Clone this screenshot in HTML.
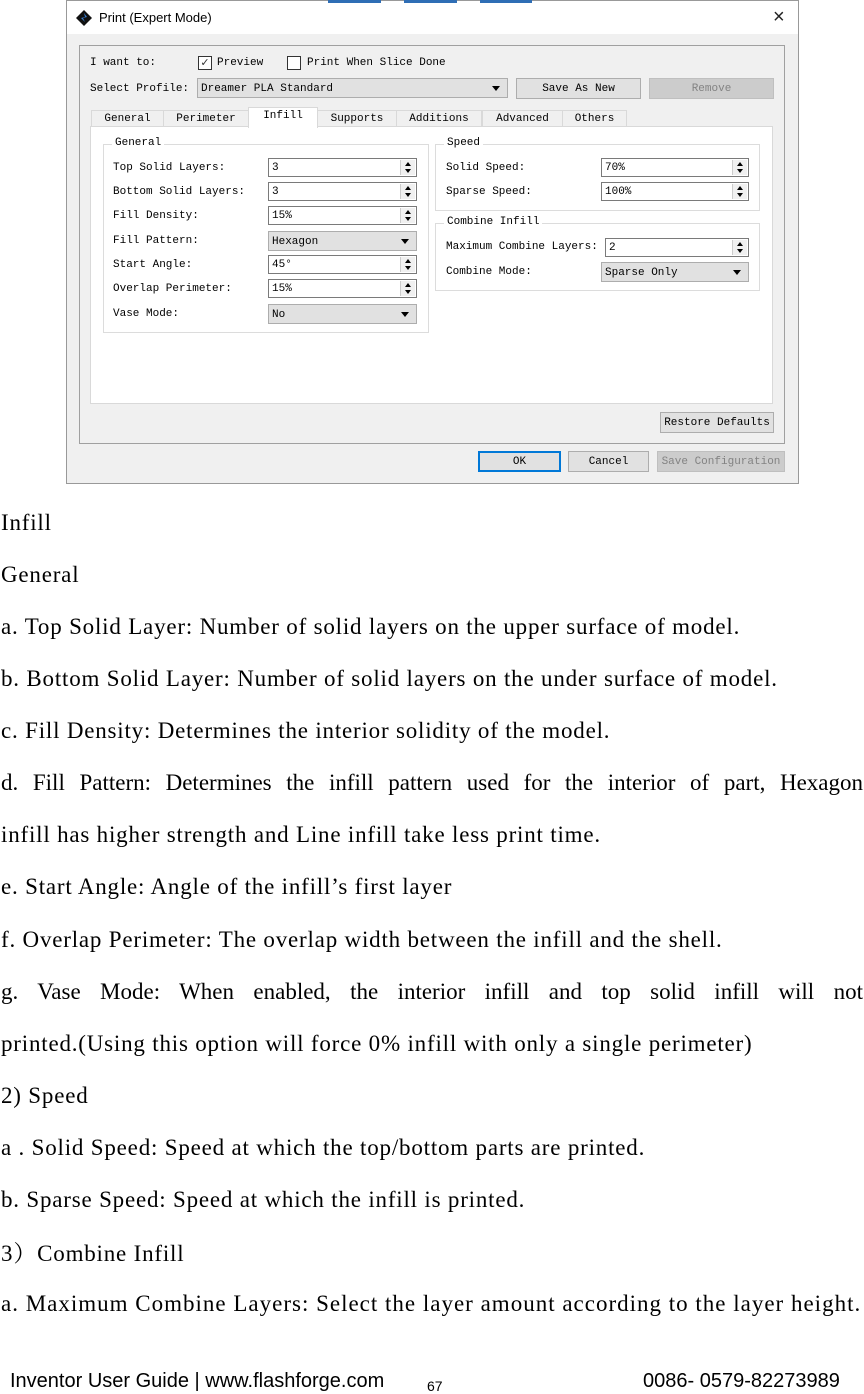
<!DOCTYPE html>
<html><head><meta charset="utf-8"><style>
*{margin:0;padding:0;box-sizing:border-box}
body{width:864px;height:1393px;background:#fff;position:relative;overflow:hidden;font-family:"Liberation Serif",serif}
.a{position:absolute}
.m{font-family:"Liberation Mono","DejaVu Sans Mono",monospace;font-size:11px;color:#000;white-space:nowrap;line-height:13px}
.inp{position:absolute;background:#fff;border:1px solid #7a7a7a;height:19px;width:149px}
.inp span{position:absolute;left:3px;top:3px}
.spin{position:absolute;right:1px;top:1px;width:15px;height:15px;border-left:1px solid #ccc;background:#f0f0f0}
.spin:before{content:"";position:absolute;left:4px;top:2px;border:3px solid transparent;border-bottom:4px solid #000;border-top:0}
.spin:after{content:"";position:absolute;left:4px;top:9px;border:3px solid transparent;border-top:4px solid #000;border-bottom:0}
.cmb{position:absolute;background:#e1e1e1;border:1px solid #adadad;height:20px;width:149px}
.cmb span{position:absolute;left:3px;top:4px}
.cmb:after{content:"";position:absolute;right:7px;top:7px;border:4px solid transparent;border-top:5px solid #000;border-bottom:0}
.btn{position:absolute;background:#e1e1e1;border:1px solid #adadad;text-align:center}
.grp{position:absolute;border:1px solid #dcdcdc}
.grp b{position:absolute;top:-8px;left:8px;background:#fff;padding:0 3px;font-weight:normal}
.tab{position:absolute;top:110px;height:17px;border:1px solid #d9d9d9;background:#f0f0f0;text-align:center;padding-top:2px}
.t{position:absolute;left:1px;font-size:23px;letter-spacing:0.8px;line-height:26px;color:#000;white-space:nowrap}
.f{position:absolute;top:1370px;font-family:'Liberation Sans',sans-serif;font-size:20px;color:#000;white-space:nowrap}
</style></head><body>
<div class="a" style="left:66px;top:0;width:733px;height:484px;background:#f0f0f0;border:1px solid #999"></div>
<div class="a" style="left:67px;top:1px;width:731px;height:33px;background:#fff"></div>
<div class="a" style="left:328px;top:0;width:53px;height:3px;background:#2f6eb5"></div>
<div class="a" style="left:404px;top:0;width:53px;height:3px;background:#2f6eb5"></div>
<div class="a" style="left:480px;top:0;width:52px;height:3px;background:#2f6eb5"></div>
<svg class="a" style="left:75px;top:9px" width="18" height="18" viewBox="0 0 18 18"><path d="M9 1L17 9L9 17L1 9Z" fill="#111"/><path d="M9 4L12 8L8 9L10 13L6 9L10 8Z" fill="#3a7fd0"/></svg>
<div class="a" style="left:99px;top:10px;font-family:'Liberation Sans',sans-serif;font-size:13px;color:#000">Print (Expert Mode)</div>
<div class="a" style="left:773px;top:7px;font-family:'Liberation Sans',sans-serif;font-size:20px;color:#222;line-height:20px">×</div>
<div class="a" style="left:79px;top:45px;width:706px;height:399px;border:1px solid #a0a0a0;background:#f0f0f0"></div>
<div class="a m" style="left:90px;top:57px">I want to:</div>
<div class="a" style="left:198px;top:56px;width:14px;height:14px;border:1px solid #333;background:#fff;font-size:11px;line-height:12px;text-align:center;color:#333">✓</div>
<div class="a m" style="left:217px;top:57px">Preview</div>
<div class="a" style="left:287px;top:56px;width:14px;height:14px;border:1px solid #333;background:#fff"></div>
<div class="a m" style="left:307px;top:57px">Print When Slice Done</div>
<div class="a m" style="left:90px;top:83px">Select Profile:</div>
<div class="cmb m" style="left:197px;top:78px;width:311px"><span>Dreamer PLA Standard</span></div>
<div class="btn m" style="left:516px;top:78px;width:125px;height:21px;padding-top:4px">Save As New</div>
<div class="btn m" style="left:649px;top:78px;width:125px;height:21px;padding-top:4px;background:#ccc;border-color:#bfbfbf;color:#838383">Remove</div>
<div class="tab m" style="left:91px;width:73px">General</div>
<div class="tab m" style="left:163px;width:86px">Perimeter</div>
<div class="tab m" style="left:317px;width:80px">Supports</div>
<div class="tab m" style="left:396px;width:86px">Additions</div>
<div class="tab m" style="left:482px;width:81px">Advanced</div>
<div class="tab m" style="left:562px;width:65px">Others</div>
<div class="a" style="left:90px;top:126px;width:683px;height:278px;background:#fff;border:1px solid #d9d9d9"></div>
<div class="tab m" style="left:248px;width:70px;top:107px;height:21px;background:#fff;border-bottom:none">Infill</div>
<div class="grp m" style="left:103px;top:144px;width:326px;height:189px"><b>General</b></div>
<div class="a m" style="left:113px;top:162px">Top Solid Layers:</div>
<div class="inp m" style="left:268px;top:158px"><span>3</span><i class="spin"></i></div>
<div class="a m" style="left:113px;top:186px">Bottom Solid Layers:</div>
<div class="inp m" style="left:268px;top:182px"><span>3</span><i class="spin"></i></div>
<div class="a m" style="left:113px;top:210px">Fill Density:</div>
<div class="inp m" style="left:268px;top:206px"><span>15%</span><i class="spin"></i></div>
<div class="a m" style="left:113px;top:235px">Fill Pattern:</div>
<div class="cmb m" style="left:268px;top:231px"><span>Hexagon</span></div>
<div class="a m" style="left:113px;top:259px">Start Angle:</div>
<div class="inp m" style="left:268px;top:255px"><span>45°</span><i class="spin"></i></div>
<div class="a m" style="left:113px;top:283px">Overlap Perimeter:</div>
<div class="inp m" style="left:268px;top:279px"><span>15%</span><i class="spin"></i></div>
<div class="a m" style="left:113px;top:308px">Vase Mode:</div>
<div class="cmb m" style="left:268px;top:304px"><span>No</span></div>
<div class="grp m" style="left:435px;top:144px;width:325px;height:67px"><b>Speed</b></div>
<div class="a m" style="left:446px;top:162px">Solid Speed:</div>
<div class="inp m" style="left:601px;top:158px;width:148px"><span>70%</span><i class="spin"></i></div>
<div class="a m" style="left:446px;top:186px">Sparse Speed:</div>
<div class="inp m" style="left:601px;top:182px;width:148px"><span>100%</span><i class="spin"></i></div>
<div class="grp m" style="left:435px;top:223px;width:325px;height:68px"><b>Combine Infill</b></div>
<div class="a m" style="left:446px;top:241px">Maximum Combine Layers:</div>
<div class="inp m" style="left:605px;top:238px;width:144px"><span>2</span><i class="spin"></i></div>
<div class="a m" style="left:446px;top:266px">Combine Mode:</div>
<div class="cmb m" style="left:601px;top:262px;width:148px"><span>Sparse Only</span></div>
<div class="btn m" style="left:660px;top:412px;width:114px;height:21px;padding-top:4px">Restore Defaults</div>
<div class="btn m" style="left:478px;top:451px;width:83px;height:21px;padding-top:3px;border:2px solid #0078d7">OK</div>
<div class="btn m" style="left:568px;top:451px;width:81px;height:21px;padding-top:4px">Cancel</div>
<div class="btn m" style="left:657px;top:451px;width:128px;height:21px;padding-top:4px;background:#ccc;border-color:#bfbfbf;color:#838383">Save Configuration</div>
<div class="t" style="top:510px">Infill</div>
<div class="t" style="top:562px">General</div>
<div class="t" style="top:614px">a. Top Solid Layer: Number of solid layers on the upper surface of model.</div>
<div class="t" style="top:666px">b. Bottom Solid Layer: Number of solid layers on the under surface of model.</div>
<div class="t" style="top:718px">c. Fill Density: Determines the interior solidity of the model.</div>
<div class="t" style="top:770px;width:862px;text-align:justify;text-align-last:justify;letter-spacing:0">d. Fill Pattern: Determines the infill pattern used for the interior of part, Hexagon</div>
<div class="t" style="top:822px">infill has higher strength and Line infill take less print time.</div>
<div class="t" style="top:874px">e. Start Angle: Angle of the infill’s first layer</div>
<div class="t" style="top:927px">f. Overlap Perimeter: The overlap width between the infill and the shell.</div>
<div class="t" style="top:979px;width:862px;text-align:justify;text-align-last:justify;letter-spacing:0">g. Vase Mode: When enabled, the interior infill and top solid infill will not</div>
<div class="t" style="top:1031px">printed.(Using this option will force 0% infill with only a single perimeter)</div>
<div class="t" style="top:1083px">2) Speed</div>
<div class="t" style="top:1135px">a . Solid Speed: Speed at which the top/bottom parts are printed.</div>
<div class="t" style="top:1187px">b. Sparse Speed: Speed at which the infill is printed.</div>
<div class="t" style="top:1239px">3<span style="font-family:'Noto Serif CJK SC',serif">）</span>Combine Infill</div>
<div class="t" style="top:1291px;letter-spacing:1px">a. Maximum Combine Layers: Select the layer amount according to the layer height.</div>
<div class="f" style="left:10px">Inventor User Guide | www.flashforge.com</div>
<div class="a" style="left:427px;top:1378px;font-family:'Liberation Sans',sans-serif;font-size:14px">67</div>
<div class="f" style="left:643px">0086- 0579-82273989</div>
</body></html>
